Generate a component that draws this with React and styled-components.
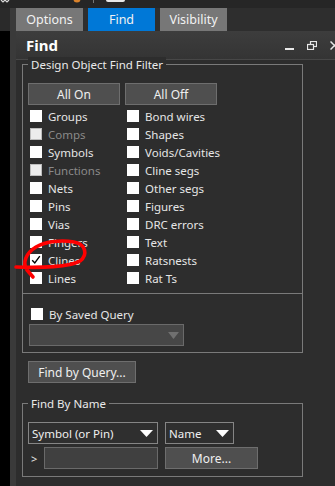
import React from "react";
import styled, { createGlobalStyle } from "styled-components";

const GlobalStyle = createGlobalStyle`
  html, body { margin: 0; padding: 0; background: #000; }
  body {
    font-family: "Noto Sans", "Open Sans", sans-serif;
    font-size: 11.5px;
    color: #e6e6e6;
  }
`;

const Screen = styled.div`
  position: relative;
  width: 335px;
  height: 486px;
  overflow: hidden;
  display: flex;
  flex-direction: column;
  background: #2d2d2d;
`;

const TopBar = styled.div`
  height: 8px;
  flex: none;
  background: #262626;
  svg { display: block; }
`;

const Main = styled.div`
  flex: 1;
  display: flex;
`;

const Gutter = styled.div`
  width: 10px;
  flex: none;
  background: linear-gradient(#2a2a2a 0 23px, #000 23px);
`;

const Window = styled.div`
  flex: 1;
  display: flex;
  flex-direction: column;
  border-left: 6px solid #3a3a3a;
  min-width: 0;
`;

const TabRow = styled.div`
  height: 23px;
  flex: none;
  display: flex;
  gap: 5px;
  background: #2e2e2e;
`;

const Tab = styled.div`
  width: 67px;
  display: flex;
  align-items: center;
  justify-content: center;
  font-size: 12.5px;
  color: #f2f2f2;
  background: ${(p) => (p.$active ? "#0078d7" : "#777777")};
`;

const Header = styled.div`
  height: 28px;
  flex: none;
  display: flex;
  align-items: center;
  justify-content: space-between;
  padding-left: 10px;
  background: linear-gradient(#3d3d3d, #343434);
  border-bottom: 1px solid #474747;
`;

const Title = styled.div`
  font-size: 15px;
  font-weight: 700;
  color: #fff;
`;

const WinIcons = styled.div`
  display: flex;
  align-items: center;
  gap: 13px;
  margin-right: -4px;
  padding-top: 1px;
  svg { display: block; }
`;

const Body = styled.div`
  flex: 1;
  padding: 4px 0 0 6px;
`;

const GroupBox = styled.div`
  box-sizing: border-box;
  width: 281px;
  border: 1px solid #7a7a7a;
  margin-top: ${(p) => p.$top || 0}px;
  padding-bottom: ${(p) => p.$pad || 0}px;
`;

const Legend = styled.div`
  width: fit-content;
  margin: -8px 0 0 5px;
  padding: 0 3px;
  line-height: 16px;
  background: #2d2d2d;
  color: #eaeaea;
`;

const Row = styled.div`
  display: flex;
  align-items: center;
  gap: ${(p) => p.$gap ?? 5}px;
  margin-top: ${(p) => p.$top || 0}px;
  padding-left: ${(p) => p.$left ?? 5}px;
`;

const Button = styled.div`
  box-sizing: border-box;
  width: ${(p) => p.$w}px;
  height: 22px;
  display: flex;
  align-items: center;
  justify-content: center;
  background: #4f4f4f;
  border: 1px solid #6e6e6e;
  color: #f0f0f0;
  font-size: 12px;
`;

const CheckGrid = styled.div`
  display: grid;
  grid-auto-flow: column;
  grid-template-rows: repeat(10, 18px);
  grid-template-columns: 97px 1fr;
  margin-top: 2px;
  padding-left: 7px;
`;

const CheckItem = styled.label`
  display: flex;
  align-items: center;
  gap: 6px;
  color: ${(p) => (p.$disabled ? "#8a8a8a" : "#e6e6e6")};
  white-space: nowrap;
`;

const Box = styled.span`
  box-sizing: border-box;
  width: 12px;
  height: 12px;
  flex: none;
  background: ${(p) => (p.$disabled ? "#ececec" : "#ffffff")};
  border: 1px solid ${(p) => (p.$disabled ? "#bdbdbd" : "#ffffff")};
  svg { display: block; }
`;

const Divider = styled.div`
  height: 1px;
  margin-top: 6px;
  background: #7a7a7a;
`;

const Select = styled.div`
  box-sizing: border-box;
  width: ${(p) => p.$w}px;
  height: 22px;
  display: flex;
  align-items: center;
  justify-content: space-between;
  padding: 0 4px 0 3px;
  margin-top: ${(p) => p.$top || 0}px;
  margin-left: ${(p) => p.$left || 0}px;
  background: ${(p) => (p.$disabled ? "#474747" : "#2f2f2f")};
  border: 1px solid ${(p) => (p.$disabled ? "#6a6a6a" : "#858585")};
  color: #f0f0f0;
  svg { display: block; }
`;

const Prompt = styled.span`
  width: 16px;
  padding-left: 3px;
  box-sizing: border-box;
  font-size: 11px;
  color: #e6e6e6;
`;

const Input = styled.div`
  box-sizing: border-box;
  width: 114px;
  height: 22px;
  background: #404040;
  border: 1px solid #6a6a6a;
  margin-right: 2px;
`;

const Overlay = styled.svg`
  position: absolute;
  left: 0;
  top: 0;
  pointer-events: none;
`;

const Arrow = ({ color, w = 13, h = 7 }) => (
  <svg width={w} height={h} viewBox={`0 0 ${w} ${h}`}>
    <polygon points={`0,0 ${w},0 ${w / 2},${h}`} fill={color} />
  </svg>
);

const Check = () => (
  <svg width="10" height="10" viewBox="0 0 10 10">
    <path d="M1.2 5.2 L3.8 8 L8.8 1.2" fill="none" stroke="#000" strokeWidth="1.4" />
  </svg>
);

const CheckBox = ({ label, checked, disabled }) => (
  <CheckItem $disabled={disabled}>
    <Box $disabled={disabled}>{checked && <Check />}</Box>
    {label}
  </CheckItem>
);

const left = [
  ["Groups"],
  ["Comps", false, true],
  ["Symbols"],
  ["Functions", false, true],
  ["Nets"],
  ["Pins"],
  ["Vias"],
  ["Fingers"],
  ["Clines", true],
  ["Lines"],
];
const right = ["Bond wires", "Shapes", "Voids/Cavities", "Cline segs", "Other segs", "Figures", "DRC errors", "Text", "Ratsnests", "Rat Ts"];

export default function App() {
  return (
    <Screen>
      <GlobalStyle />
      <TopBar>
        <svg width="335" height="8">
          <path d="M1 0 L3 2 L5 0 L7 2 L9 0" stroke="#d8d8d8" strokeWidth="1.2" fill="none" />
          <circle cx="77" cy="-1" r="3.5" fill="#d9822b" />
          <rect x="93" y="0" width="1" height="3" fill="#777" />
          <rect x="106" y="-4" width="19" height="6" rx="2" fill="#e8e8e8" />
        </svg>
      </TopBar>
      <Main>
        <Gutter />
        <Window>
          <TabRow>
            <Tab>Options</Tab>
            <Tab $active>Find</Tab>
            <Tab>Visibility</Tab>
          </TabRow>
          <Header>
            <Title>Find</Title>
            <WinIcons>
              <svg width="9" height="9" viewBox="0 0 9 9">
                <rect x="0" y="7" width="9" height="2" fill="#e8e8e8" />
              </svg>
              <svg width="10" height="9" viewBox="0 0 10 9">
                <rect x="3.5" y="0.5" width="6" height="5" fill="none" stroke="#e8e8e8" strokeWidth="1.2" />
                <rect x="0.5" y="3.5" width="6" height="5" fill="#3a3a3a" stroke="#e8e8e8" strokeWidth="1.2" />
              </svg>
              <svg width="9" height="9" viewBox="0 0 9 9">
                <path d="M0.5 0.5 L8.5 8.5 M8.5 0.5 L0.5 8.5" stroke="#e8e8e8" strokeWidth="1.5" />
              </svg>
            </WinIcons>
          </Header>
          <Body>
            <GroupBox $pad={6}>
              <Legend>Design Object Find Filter</Legend>
              <Row $top={10}>
                <Button $w={92}>All On</Button>
                <Button $w={92}>All Off</Button>
              </Row>
              <CheckGrid>
                {left.map(([l, c, d]) => (
                  <CheckBox key={l} label={l} checked={c} disabled={d} />
                ))}
                {right.map((l) => (
                  <CheckBox key={l} label={l} />
                ))}
              </CheckGrid>
              <Divider />
              <Row $top={11} $left={8} style={{ height: 18 }}>
                <CheckBox label="By Saved Query" />
              </Row>
              <Select $w={155} $top={1} $left={6} $disabled>
                <span />
                <Arrow color="#707070" w={11} h={7} />
              </Select>
            </GroupBox>
            <Row $top={8} $left={6}>
              <Button $w={108}>Find by Query...</Button>
            </Row>
            <GroupBox $top={20} $pad={7}>
              <Legend>Find By Name</Legend>
              <Row $top={10} $gap={7}>
                <Select $w={130}>
                  Symbol (or Pin)
                  <Arrow color="#ffffff" />
                </Select>
                <Select $w={69}>
                  Name
                  <Arrow color="#ffffff" />
                </Select>
              </Row>
              <Row $top={3} $gap={0}>
                <Prompt>&gt;</Prompt>
                <Input />
                <Button $w={93} style={{ marginLeft: 5 }}>More...</Button>
              </Row>
            </GroupBox>
          </Body>
        </Window>
      </Main>
      <Overlay width="335" height="486">
        <path
          d="M16 267 C 40 268, 70 267, 80 261 C 88 255, 86 244, 74 242 C 62 240, 46 241, 36 247 C 26 253, 22 263, 27 270 L 33 277"
          fill="none"
          stroke="#ff0000"
          strokeWidth="3.6"
          strokeLinecap="round"
          strokeLinejoin="round"
        />
      </Overlay>
    </Screen>
  );
}
